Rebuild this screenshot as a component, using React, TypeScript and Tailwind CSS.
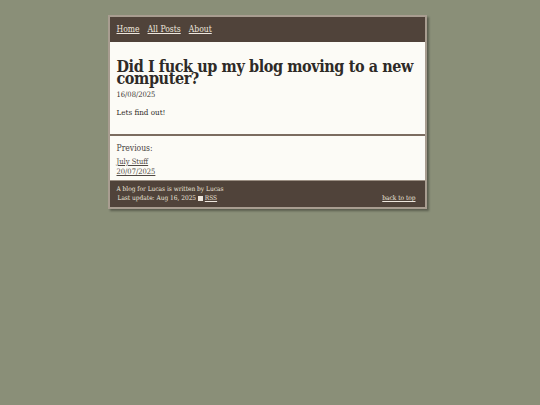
export default function App() {
  const serif = { fontFamily: '"DejaVu Serif Condensed", "DejaVu Serif", "Liberation Serif", serif' };
  return (
    <div className="min-h-screen bg-[#8a8f78] pt-[15px] [font-stretch:semi-condensed]" style={serif}>
      <div className="mx-auto w-[319px] translate-x-[-3px] border-2 border-[#a89d90] shadow-[2px_2px_2px_rgba(0,0,0,0.35)]">
        {/* Nav */}
        <nav className="flex h-[25px] items-center gap-[8px] bg-[#50433a] px-[7px] text-[8.5px] text-[#eee7de]">
          <a href="#" className="underline">Home</a>
          <a href="#" className="underline">All Posts</a>
          <a href="#" className="underline">About</a>
        </nav>

        {/* Post */}
        <main className="border-b-2 border-[#7b6c60] bg-[#fcfbf6] px-[7px] pb-[16px] pt-[19px] text-[#2e2a27]">
          <h1 className="text-[16px] font-bold leading-[12px] tracking-[-0.4px]">
            Did I fuck up my blog moving to a new computer?
          </h1>
          <div className="mt-[5px] text-[7.5px] leading-[10px] text-[#3a3531]">16/08/2025</div>
          <p className="mt-[8px] text-[8px] leading-[10px]">Lets find out!</p>
        </main>

        {/* Previous */}
        <section className="bg-[#fcfbf6] px-[7px] pb-[3px] pt-[6px] text-[#2e2a27]">
          <div className="text-[8.5px] leading-[12px] text-[#4a443f]">Previous:</div>
          <a href="#" className="mt-[3px] block text-[7.5px] leading-[10px] text-[#4f4843] underline">
            July Stuff
            <br />
            20/07/2025
          </a>
        </section>

        {/* Footer */}
        <footer className="flex items-end justify-between border-t border-[#9b8f83] bg-[#50433a] px-[7px] pb-[4px] pt-[4px] text-[6.5px] leading-[9px] text-[#eee7de]">
          <div>
            <div>A blog for Lucas is written by Lucas</div>
            <div className="pl-[1px]">
              Last update: Aug 16, 2025 <span className="inline-block h-[5px] w-[5px] bg-[#eee7de] align-middle"></span>{' '}
              <a href="#" className="underline">RSS</a>
            </div>
          </div>
          <a href="#" className="mr-[2px] underline">back to top</a>
        </footer>
      </div>
    </div>
  );
}
